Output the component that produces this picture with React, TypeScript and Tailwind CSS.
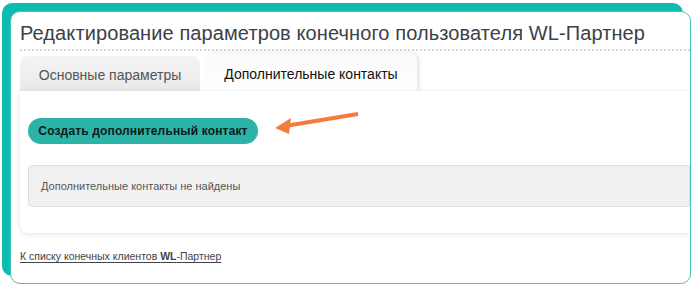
import React from 'react';

const Arrow: React.FC = () => (
  <svg className="absolute left-[235px] top-[10px]" width="110" height="40" viewBox="0 0 110 40">
    <line x1="103" y1="13" x2="30" y2="25" stroke="#f57b3b" strokeWidth="4" />
    <polygon points="20,27 36,17 34,33" fill="#f57b3b" />
  </svg>
);

const App: React.FC = () => {
  return (
    <div className="w-[694px] h-[286px] bg-white overflow-hidden pt-[11px] pl-[10px]" style={{ fontFamily: '"Liberation Sans", Arial, sans-serif' }}>
      <div className="w-[681px] h-[273px] bg-white border border-[#3ec7bf] rounded-[10px] shadow-[-8px_-8px_0_0_#0dbcb1] overflow-hidden">
        <div className="pl-[9px]">
          <h1 className="text-[20px] leading-[24px] pt-[9px] text-[#3b4148] tracking-[0.1px]">
            Редактирование параметров конечного пользователя WL-Партнер
          </h1>
          <div className="mt-[4px] border-t-2 border-dotted border-[#d6d6d6]" />
          <div className="flex items-end gap-[5px] h-[40px]">
            <div className="w-[180px] h-[35px] rounded-t-[8px] bg-gradient-to-b from-[#f4f4f4] to-[#e9e9e9] flex items-center justify-center text-[14px] text-[#555] pt-[3px]">
              Основные параметры
            </div>
            <div className="w-[212px] h-[38px] rounded-t-[8px] bg-gradient-to-b from-[#fafafa] to-white shadow-[2px_0_4px_rgba(0,0,0,0.12)] flex items-center justify-center text-[14px] text-[#111] pt-[4px]">
              Дополнительные контакты
            </div>
          </div>
          <div className="relative bg-white rounded-bl-[8px] shadow-[0_1px_5px_rgba(0,0,0,0.12)] h-[142px] pl-[8px] pt-[27px]">
            <button className="h-[26px] w-[230px] rounded-full bg-[#2cb3a8] text-[12px] font-bold text-[#0c1a1a] tracking-[0.15px]">
              Создать дополнительный контакт
            </button>
            <Arrow />
            <div className="mt-[21px] h-[42px] bg-[#f1f1f1] border border-[#dedede] rounded-l-[4px] flex items-center pl-[12px] text-[11px] text-[#555]">
              Дополнительные контакты не найдены
            </div>
          </div>
          <a href="#" className="block mt-[16px] text-[10.5px] text-[#444] underline underline-offset-2">
            К списку конечных клиентов <span className="font-bold">WL</span>-Партнер
          </a>
        </div>
      </div>
    </div>
  );
};

export default App;
